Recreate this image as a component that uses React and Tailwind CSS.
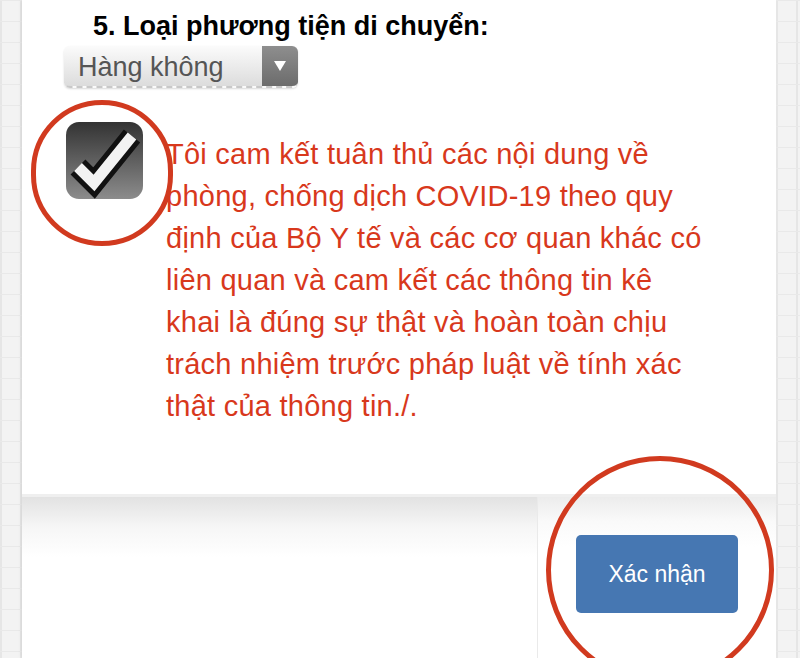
import React from 'react'

const stripBg =
  'bg-[#f3f3f3] bg-[linear-gradient(#e9e9e9_1px,transparent_1px),linear-gradient(90deg,#e6e6e6_2px,transparent_2px)] bg-[size:20px_21px]'

const CheckBox = () => (
  <svg width="77" height="77" viewBox="0 0 77 77" className="shrink-0 overflow-visible">
    <defs>
      <linearGradient id="cbg" x1="0" y1="0" x2="0" y2="1">
        <stop offset="0" stopColor="#333" />
        <stop offset="1" stopColor="#8c8c8c" />
      </linearGradient>
    </defs>
    <rect x="0" y="0" width="77" height="77" rx="13" fill="url(#cbg)" />
    <polyline points="12,45 28,61 66,14" fill="none" stroke="#111" strokeWidth="21" strokeLinejoin="miter" />
    <polyline points="12,45 28,61 66,14" fill="none" stroke="#f2f2f2" strokeWidth="11" strokeLinejoin="miter" />
  </svg>
)

const lines = [
  'Tôi cam kết tuân thủ các nội dung về',
  'phòng, chống dịch COVID-19 theo quy',
  'định của Bộ Y tế và các cơ quan khác có',
  'liên quan và cam kết các thông tin kê',
  'khai là đúng sự thật và hoàn toàn chịu',
  'trách nhiệm trước pháp luật về tính xác',
  'thật của thông tin./.',
]

export default function App() {
  return (
    <div className="relative w-[800px] h-[658px] overflow-hidden flex bg-white font-['Liberation_Sans',Arial,sans-serif]">
      <div className={`w-[22px] shrink-0 ${stripBg}`} />
      <div className="flex-1 flex flex-col shadow-[0_0_4px_rgba(0,0,0,0.12)]">
        <div className="h-[497px] bg-white border-b-[3px] border-[#efefef] pl-[42px] pt-[10px]">
          <h2 className="ml-[29px] text-[27px] font-bold text-black leading-[32px]">5. Loại phương tiện di chuyển:</h2>
          <div className="mt-[4px] flex w-[234px] h-[42px] rounded-[6px] border-b-2 border-dashed border-[#c8c8c8] bg-[linear-gradient(#fbfbfb,#dcdcdc)] shadow-[0_1px_2px_rgba(0,0,0,0.15)] overflow-hidden">
            <span className="flex-1 pl-[14px] text-[27px] leading-[42px] text-[#555]">Hàng không</span>
            <span className="w-[36px] flex items-center justify-center bg-[linear-gradient(#8e8e8e,#6c6c6c)]">
              <svg width="12" height="10" viewBox="0 0 12 10"><polygon points="0,0 12,0 6,10" fill="#fff" /></svg>
            </span>
          </div>
          <div className="mt-[32px] flex items-start">
            <div className="ml-[2px] mt-[2px]"><CheckBox /></div>
            <p className="ml-[23px] mt-[13px] text-[29px] leading-[42px] tracking-[0.25px] text-[#d8381c]">
              {lines.map((l, i) => (
                <span key={i} className="block whitespace-nowrap">{l}</span>
              ))}
            </p>
          </div>
        </div>
        <div className="flex-1 flex">
          <div className="flex-1 bg-[linear-gradient(#e2e2e2,#f6f6f6_30px,#ffffff_60px)]" />
          <div className="w-[239px] bg-[linear-gradient(#ececec,#fafafa_25px,#ffffff_50px)] border-l border-[#eaeaea] pt-[38px] pl-[38px]">
            <button className="w-[162px] h-[78px] rounded-[5px] bg-[#4677b2] text-white text-[23px]">Xác nhận</button>
          </div>
        </div>
      </div>
      <div className={`w-[24px] shrink-0 ${stripBg}`} />

      <div className="absolute left-[31px] top-[100px] w-[142px] h-[146px] rounded-full border-[5px] border-[#d13a1f]" />
      <div className="absolute left-[546px] top-[456px] w-[228px] h-[228px] rounded-full border-[5px] border-[#d13a1f]" />
    </div>
  )
}
